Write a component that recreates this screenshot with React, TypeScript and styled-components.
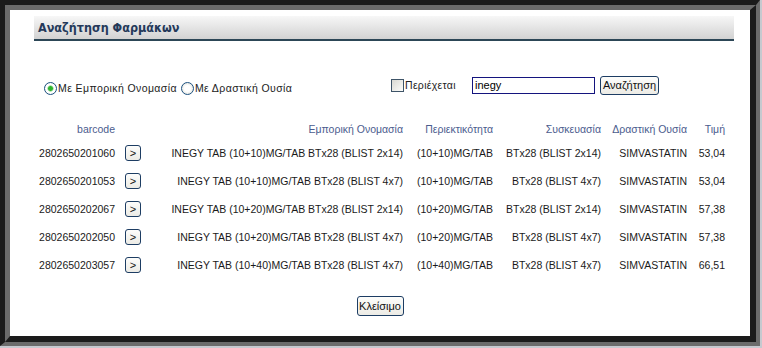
import React from 'react'
import styled, { createGlobalStyle } from 'styled-components'

const GlobalStyle = createGlobalStyle`
  body {
    margin: 0;
    background: #c6c9cf;
    font-family: "Liberation Sans", Arial, sans-serif;
  }
`

const Frame = styled.div`
  width: 760px;
  height: 346px;
  box-sizing: border-box;
  border-style: solid;
  border-width: 5px 4px 4px 5px;
  border-color: #1b1b1b #6b6b6b #6b6b6b #1b1b1b;
`
const Inner = styled.div`
  height: 100%;
  box-sizing: border-box;
  border-style: solid;
  border-width: 5px 6px 6px 5px;
  border-color: #6b6b6b #1b1b1b #1b1b1b #6b6b6b;
  background: #fff;
  padding-top: 6px;
`
const TitleBar = styled.div`
  margin: 0 16px 0 24px;
  height: 23px;
  border-bottom: 2px solid #2c4656;
  background: linear-gradient(#f7f7f7, #d2d2d2);
  display: flex;
  align-items: center;
  padding-left: 4px;
`
const Title = styled.h1`
  margin: 0;
  font-family: "DejaVu Sans", Verdana, sans-serif;
  font-stretch: condensed;
  font-size: 12.5px;
  font-weight: bold;
  color: #24395a;
`
const SearchRow = styled.div`
  margin-top: 34px;
  height: 20px;
  display: flex;
  align-items: center;
  font-size: 10.5px;
  color: #222;
`
const RadioGroup = styled.div`
  width: 347px;
  margin-left: 34px;
  margin-top: 6px;
  display: flex;
  align-items: center;
  letter-spacing: 0.4px;
`
const Option = styled.label<{ $gap?: number }>`
  display: flex;
  align-items: center;
  margin-right: ${p => p.$gap ?? 0}px;
`
const RadioMark = styled.span<{ $checked?: boolean }>`
  width: 11px;
  height: 11px;
  border: 1px solid #1c5180;
  border-radius: 50%;
  margin-right: 1px;
  background: ${p => p.$checked
    ? 'radial-gradient(circle, #2fb52f 0 2px, #7dd07d 2.5px, #fff 3.5px, #fff 5px, #e4e4de 6px)'
    : 'radial-gradient(circle, #fff 0 3px, #e6e6e0 6px)'};
`
const CheckMark = styled.span`
  width: 11px;
  height: 11px;
  border: 1px solid #3e5468;
  margin-right: 1px;
  background: linear-gradient(135deg, #d8d8d2, #fdfdfb);
`
const CheckLabel = styled.span`
  width: 67px;
  letter-spacing: 0.3px;
`
const SearchInput = styled.div`
  width: 119px;
  height: 15px;
  border: 1px solid #14147e;
  font-size: 11px;
  line-height: 15px;
  padding-left: 2px;
  color: #000;
  box-sizing: content-box;
`
const Button = styled.button<{ $w: number; $h: number }>`
  width: ${p => p.$w}px;
  height: ${p => p.$h}px;
  padding: 0;
  border: 1px solid #1d3d63;
  border-radius: 3px;
  background: linear-gradient(#fdfdfb, #ecebe5);
  font-family: "Liberation Sans", Arial, sans-serif;
  font-size: 11px;
  color: #111;
  display: flex;
  align-items: center;
  justify-content: center;
`
const SearchButton = styled(Button)`
  margin-left: 5px;
`
const Table = styled.div`
  margin: 24px 0 0 20px;
  display: grid;
  grid-template-columns: 89px 27px 261px 90px 108px 86px 38px;
  grid-template-rows: 20px;
  grid-auto-rows: 28px;
  font-size: 10.5px;
`
const Cell = styled.div<{ $head?: boolean }>`
  display: flex;
  align-items: center;
  justify-content: flex-end;
  padding-right: 4px;
  white-space: nowrap;
  color: ${p => (p.$head ? '#4b5c8e' : '#1a1a1a')};
`
const ButtonCell = styled.div`
  display: flex;
  align-items: center;
  padding-left: 6px;
`
const Footer = styled.div`
  margin-top: 17px;
  display: flex;
  justify-content: center;
`

const headers = ['barcode', '', 'Εμπορική Ονομασία', 'Περιεκτικότητα', 'Συσκευασία', 'Δραστική Ουσία', 'Τιμή']

const rows = [
  ['2802650201060', 'INEGY TAB (10+10)MG/TAB BTx28 (BLIST 2x14)', '(10+10)MG/TAB', 'BTx28 (BLIST 2x14)', 'SIMVASTATIN', '53,04'],
  ['2802650201053', 'INEGY TAB (10+10)MG/TAB BTx28 (BLIST 4x7)', '(10+10)MG/TAB', 'BTx28 (BLIST 4x7)', 'SIMVASTATIN', '53,04'],
  ['2802650202067', 'INEGY TAB (10+20)MG/TAB BTx28 (BLIST 2x14)', '(10+20)MG/TAB', 'BTx28 (BLIST 2x14)', 'SIMVASTATIN', '57,38'],
  ['2802650202050', 'INEGY TAB (10+20)MG/TAB BTx28 (BLIST 4x7)', '(10+20)MG/TAB', 'BTx28 (BLIST 4x7)', 'SIMVASTATIN', '57,38'],
  ['2802650203057', 'INEGY TAB (10+40)MG/TAB BTx28 (BLIST 4x7)', '(10+40)MG/TAB', 'BTx28 (BLIST 4x7)', 'SIMVASTATIN', '66,51'],
]

export default function App() {
  return <>
    <GlobalStyle />
    <Frame>
      <Inner>
        <TitleBar>
          <Title>Αναζήτηση Φαρμάκων</Title>
        </TitleBar>
        <SearchRow>
          <RadioGroup>
            <Option $gap={4}><RadioMark $checked />Με Εμπορική Ονομασία</Option>
            <Option><RadioMark />Με Δραστική Ουσία</Option>
          </RadioGroup>
          <Option><CheckMark /><CheckLabel>Περιέχεται</CheckLabel></Option>
          <SearchInput>inegy</SearchInput>
          <SearchButton $w={59} $h={19}>Αναζήτηση</SearchButton>
        </SearchRow>
        <Table>
          {headers.map((h, i) => <Cell key={i} $head>{h}</Cell>)}
          {rows.map(r => <React.Fragment key={r[0]}>
            <Cell>{r[0]}</Cell>
            <ButtonCell><Button $w={16} $h={16}>&gt;</Button></ButtonCell>
            {r.slice(1).map((v, i) => <Cell key={i}>{v}</Cell>)}
          </React.Fragment>)}
        </Table>
        <Footer>
          <Button $w={47} $h={20}>Κλείσιμο</Button>
        </Footer>
      </Inner>
    </Frame>
  </>
}
